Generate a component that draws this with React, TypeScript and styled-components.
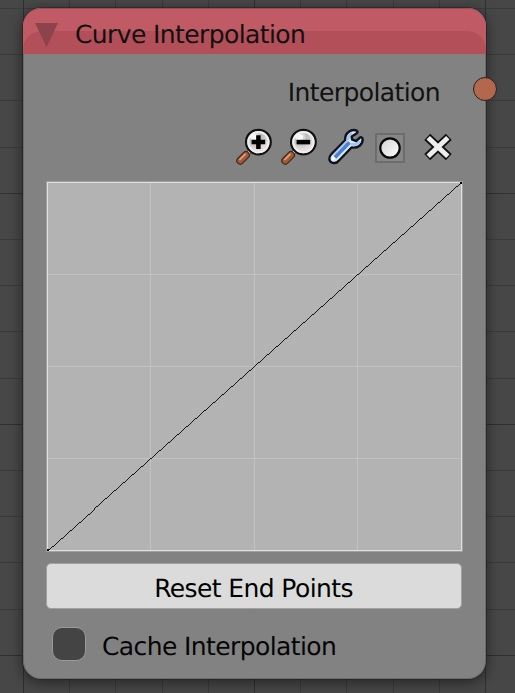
import React from "react";
import styled, { createGlobalStyle } from "styled-components";

const GlobalStyle = createGlobalStyle`
  *, *::before, *::after { box-sizing: border-box; }
  body { margin: 0; background: #474747; overflow: hidden; }
`;

const Canvas = styled.main`
  position: relative;
  width: 515px;
  height: 693px;
  padding: 8px 0 0 23px;
  overflow: hidden;
  background: #474747;
  font-family: "DejaVu Sans", sans-serif;
  font-size: 25px;
  text-rendering: geometricPrecision;
  color: #111;
`;

const Backdrop = styled.svg`
  position: absolute;
  inset: 0;
`;

const Node = styled.section`
  position: relative;
  width: 463px;
  height: 671px;
  border: 1px solid #6b6b6b;
  border-top: 0;
  border-radius: 18px;
  background: rgba(133, 133, 133, 0.965);
  box-shadow: 0 0 0 0.6px #202020, 0 3px 13px 1px rgba(0, 0, 0, 0.45);
`;

const Header = styled.header`
  display: flex;
  align-items: center;
  height: 46px;
  margin: 0 -1px;
  padding: 6px 0 0 12px;
  border-top: 1px solid #9b4d56;
  border-radius: 18px 18px 0 0;
  background:
    radial-gradient(circle at 18px 40px, #b24f59 17.5px, transparent 18px) 0 0 / 18px 40px no-repeat,
    radial-gradient(circle at 0 40px, #b24f59 17.5px, transparent 18px) 100% 0 / 18px 40px no-repeat,
    linear-gradient(#b24f59, #b24f59) 18px 22px / calc(100% - 36px) 24px no-repeat,
    linear-gradient(#b24f59, #b24f59) 0 40px / 100% 6px no-repeat,
    #c05b66;
`;

const Collapse = styled.svg`
  flex: none;
  width: 23px;
  height: 24px;
  margin-right: 17px;
`;

const Label = styled.span<{ $spacing?: number }>`
  line-height: 28px;
  white-space: nowrap;
  letter-spacing: ${({ $spacing = -0.6 }) => $spacing}px;
`;

const OutputRow = styled.div`
  display: flex;
  justify-content: flex-end;
  height: 72px;
  padding: 25px 45px 0 0;
`;

const Socket = styled.i`
  position: absolute;
  top: 69px;
  right: -12px;
  width: 24px;
  height: 24px;
  border: 1px solid #252220;
  border-radius: 50%;
  background: #b3674c;
`;

const Toolbar = styled.div`
  display: flex;
  height: 55px;
  padding-left: 211px;
`;

const ToolIcon = styled.svg<{ $gap: number }>`
  flex: none;
  width: 40px;
  height: 42px;
  margin-right: ${({ $gap }) => $gap}px;
`;

const Plot = styled.svg`
  display: block;
  width: 417px;
  height: 371px;
  margin-left: 22px;
`;

const ResetButton = styled.button`
  display: flex;
  justify-content: center;
  width: 416px;
  height: 46px;
  margin: 11px 0 0 22px;
  padding: 11px 1px 0 0;
  border: 1px solid #a0a0a0;
  border-radius: 5px;
  background: #dbdbdb;
  color: #000;
  font: inherit;
  text-rendering: inherit;
`;

const CheckRow = styled.label`
  display: flex;
  align-items: flex-start;
  height: 36px;
  margin: 18px 0 0 28px;
  color: #050505;

  ${Label} { margin-top: 6px; }
`;

const Check = styled.i`
  width: 34px;
  height: 34px;
  margin-right: 16px;
  border: 1px solid #9b9b9b;
  border-radius: 10px;
  background: #444;
`;

const majors = (i: number) => i % 5 === 0;
const columns = Array.from({ length: 11 }, (_, i) => ({ at: Math.round(23 + i * 46.2), strong: majors(i) }));
const rows = Array.from({ length: 15 }, (_, i) => ({ at: Math.round(8 + i * 46.2), strong: majors(i + 1) }));

function Magnifier({ plus, gap }: { plus?: boolean; gap: number }) {
  return (
    <ToolIcon $gap={gap} viewBox="0 0 40 42">
      <path d="M16 24L11 29" stroke="#555" strokeWidth="4.5" />
      <path d="M16 24L11 29" stroke="#e4e4e4" strokeWidth="2.5" />
      <path d="M11 29L5.3 34.7" stroke="#3a2a22" strokeWidth="8" strokeLinecap="round" />
      <path d="M11 29L5.3 34.7" stroke="#a35a32" strokeWidth="5.6" strokeLinecap="round" />
      <path d="M10 28.3L5 33.3" stroke="#e0a07b" strokeWidth="1.8" strokeLinecap="round" />
      <circle cx="23.4" cy="16.1" r="12.3" fill="url(#lens)" stroke="#111" strokeWidth="2.3" />
      <circle cx="23.4" cy="16.1" r="10.2" fill="none" stroke="#eee" strokeWidth="2" />
      <ellipse cx="19" cy="11" rx="4" ry="3" fill="#fff" opacity=".75" />
      <path d={plus ? "M16.6 16.1H30.2M23.4 9.3V22.9" : "M16.6 16.1H30.2"} stroke="#000" strokeWidth="4.5" />
    </ToolIcon>
  );
}

const wrenchPath =
  "M30.5 4.5C25 2.7 18.5 7 19.2 14L5.5 28C2.2 31.2 2.8 35.8 6.5 36.8C9 37.5 11.5 36.5 13 34.5L25.5 21.5C32 22.5 37 18.5 36.6 13.2C36.5 11.2 34.7 10.8 33.5 12L30.3 15L26.2 13.7L25.6 10.5L30.5 7.4C32 6.4 31.8 5 30.5 4.5Z";

export default function App() {
  return (
    <>
      <GlobalStyle />
      <Canvas>
        <Backdrop width="515" height="693" shapeRendering="crispEdges">
          {rows.map(({ at, strong }) => (
            <path key={`r${at}`} d={`M0 ${at + 0.5}H515`} stroke={strong ? "#303030" : "#3b3b3b"} />
          ))}
          {columns.map(({ at, strong }) => (
            <path key={`c${at}`} d={`M${at + 0.5} 0V693`} stroke={strong ? "#303030" : "#3b3b3b"} />
          ))}
        </Backdrop>
        <Node>
          <Header>
            <Collapse viewBox="0 0 23 24">
              <path d="M0 0H23L11.5 24Z" fill="#8c434b" />
            </Collapse>
            <Label>Curve Interpolation</Label>
          </Header>
          <Socket />
          <OutputRow>
            <Label>Interpolation</Label>
          </OutputRow>
          <Toolbar>
            <Magnifier plus gap={5} />
            <Magnifier gap={6} />
            <ToolIcon $gap={3} viewBox="0 0 40 42">
              <defs>
                <radialGradient id="lens" cx=".4" cy=".3">
                  <stop stopColor="#f4f4f4" />
                  <stop offset=".5" stopColor="#bbb" />
                  <stop offset="1" stopColor="#e5dfdc" />
                </radialGradient>
                <linearGradient id="knob" x2="1" y2="1">
                  <stop stopColor="#d1d1d1" />
                  <stop offset="1" stopColor="#fff" />
                </linearGradient>
              </defs>
              <path d={wrenchPath} fill="#dceaff" stroke="#101419" strokeWidth="2.4" strokeLinejoin="round" />
              <path d="M22 15L8 30M22 14Q22 9 26 7M25 18Q31 20 34 15" fill="none" stroke="#a5c5f4" strokeWidth="2.6" />
              <path d="M23.5 16.5L9 31.5" stroke="#4c80cf" strokeWidth="3.4" />
              <circle cx="7.5" cy="32.5" r="1.5" fill="#fff" />
            </ToolIcon>
            <ToolIcon $gap={8} viewBox="0 0 40 42">
              <rect x="7" y="8" width="28" height="28" fill="#868686" stroke="#6b6b6b" strokeWidth="1.8" />
              <circle cx="21" cy="22" r="9.7" fill="url(#knob)" stroke="#080808" strokeWidth="2.2" />
            </ToolIcon>
            <ToolIcon $gap={0} viewBox="0 0 40 42">
              <path d="M10.2 10.8L31.8 31.2M31.8 10.8L10.2 31.2" stroke="#111" strokeWidth="8.6" />
              <path d="M11.2 11.7L30.8 30.3M30.8 11.7L11.2 30.3" stroke="#eee" strokeWidth="4.9" />
            </ToolIcon>
          </Toolbar>
          <Plot viewBox="0 0 417 371" shapeRendering="crispEdges">
            <rect width="417" height="371" fill="#a0a0a0" />
            <rect x="1" y="1" width="415" height="369" fill="#b3b3b3" />
            <path d="M1 93.5H416M1 185.5H416M1 277.5H416M104.5 1V370M208.5 1V370M311.5 1V370" stroke="#c2c2c2" />
            <path d="M1.5 370V1.5H415.5V369.5H1" fill="none" stroke="#e0e0e0" />
            <path d="M1.5 369.5L415.5 1.5" stroke="#000" strokeWidth=".9" />
            <path d="M1 368h2v2h-2zM414 1h2v2h-2z" fill="#000" />
          </Plot>
          <ResetButton type="button">
            <Label>Reset End Points</Label>
          </ResetButton>
          <CheckRow>
            <Check />
            <Label>Cache Interpolation</Label>
          </CheckRow>
        </Node>
      </Canvas>
    </>
  );
}
